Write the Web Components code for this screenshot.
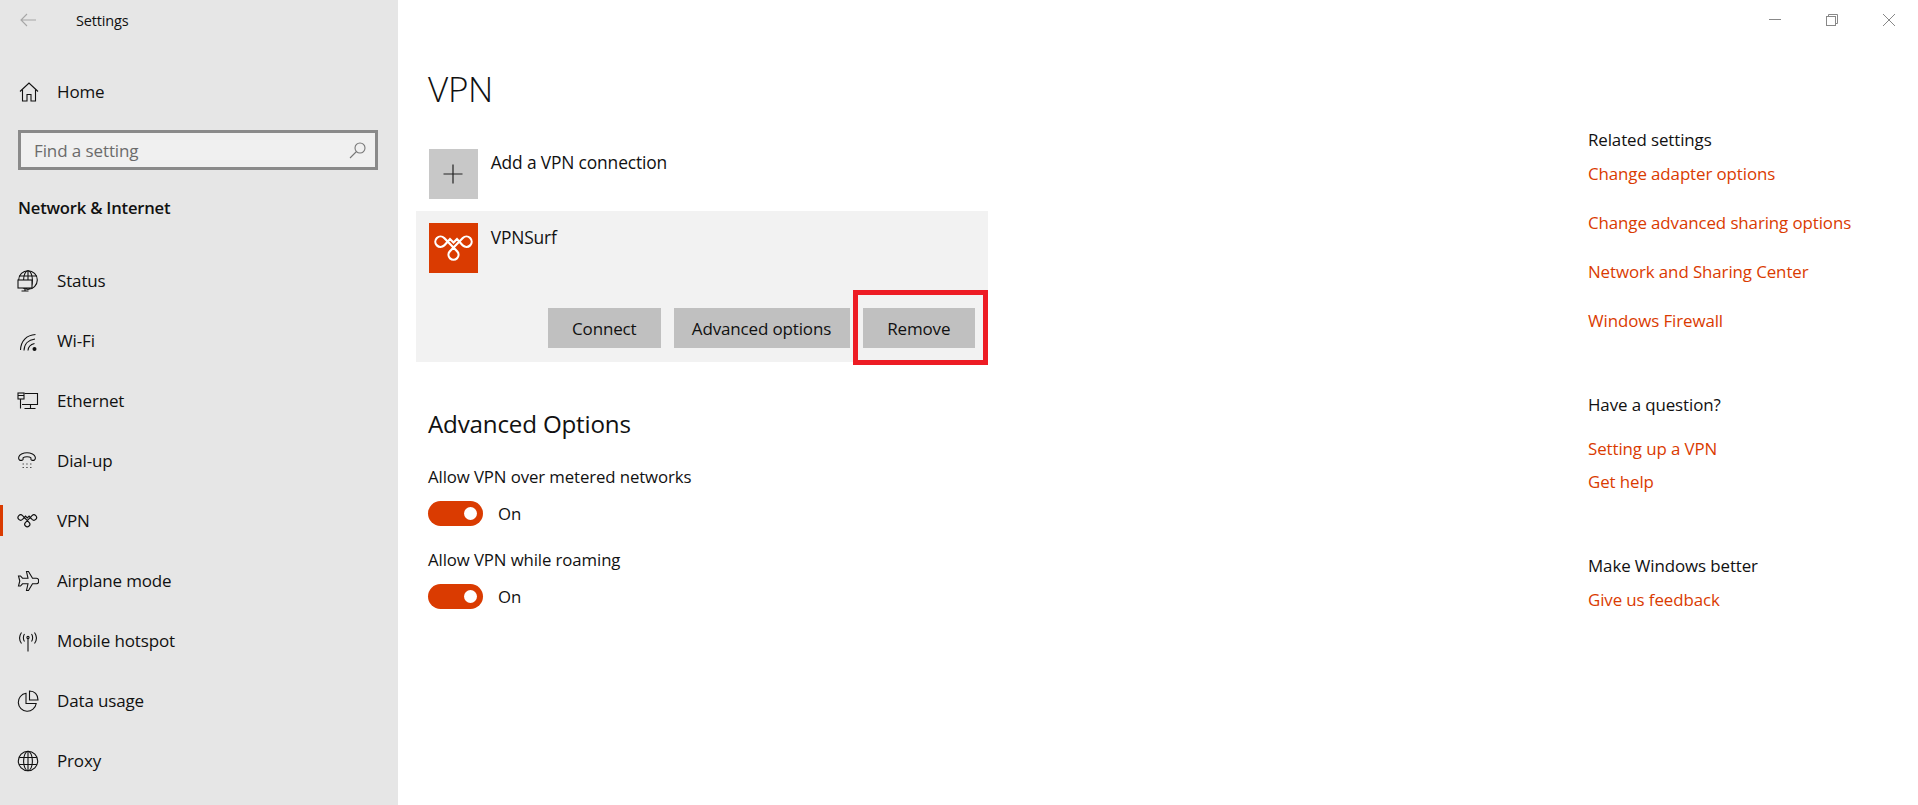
<!DOCTYPE html>
<html lang="en"><head><meta charset="utf-8"><title>Settings</title>
<style>
html,body{margin:0;padding:0;background:#fff;height:805px;overflow:hidden}
body{font-family:"Open Sans","Noto Sans",sans-serif;color:#111}
</style></head><body>
<settings-window>
  <nav-pane slot="nav" title-text="Settings" section="Network &amp; Internet">
    <nav-item icon="status">Status</nav-item>
    <nav-item icon="wifi">Wi-Fi</nav-item>
    <nav-item icon="ethernet">Ethernet</nav-item>
    <nav-item icon="dialup">Dial-up</nav-item>
    <nav-item icon="vpn" active>VPN</nav-item>
    <nav-item icon="airplane">Airplane mode</nav-item>
    <nav-item icon="hotspot">Mobile hotspot</nav-item>
    <nav-item icon="data">Data usage</nav-item>
    <nav-item icon="proxy">Proxy</nav-item>
  </nav-pane>
  <window-controls slot="bar"></window-controls>
  <vpn-content slot="content">
    <tile-row kind="add">Add a VPN connection</tile-row>
    <vpn-panel>
      <tile-row kind="vpn">VPNSurf</tile-row>
      <action-button slot="actions">Connect</action-button>
      <action-button slot="actions" style="--w:176px">Advanced options</action-button>
      <action-button slot="actions" marked>Remove</action-button>
    </vpn-panel>
    <section-heading>Advanced Options</section-heading>
    <toggle-row style="--top:25px">Allow VPN over metered networks</toggle-row>
    <toggle-row style="--top:22px">Allow VPN while roaming</toggle-row>
  </vpn-content>
  <aside-pane slot="aside">
    <link-group heading="Related settings" style="--top:88px;--first:10px;--gap:25px">
      <a href="#">Change adapter options</a>
      <a href="#">Change advanced sharing options</a>
      <a href="#">Network and Sharing Center</a>
      <a href="#">Windows Firewall</a>
    </link-group>
    <link-group heading="Have a question?" style="--top:60px;--first:20px;--gap:9px">
      <a href="#">Setting up a VPN</a>
      <a href="#">Get help</a>
    </link-group>
    <link-group heading="Make Windows better" style="--top:60px;--first:10px;--gap:0px">
      <a href="#">Give us feedback</a>
    </link-group>
  </aside-pane>
</settings-window>
<script>
const svg=(inner,w=22,h=22)=>`<svg width="${w}" height="${h}" viewBox="0 0 22 22" fill="none" stroke="currentColor" stroke-width="1.1" aria-hidden="true">${inner}</svg>`;
const KNOT='M15.2 15A5.2 5.2 0 1 0 15.2 22.4L21 16L24.5 19.5L28 16L33.8 22.4A5.2 5.2 0 1 0 33.8 15L20.7 28.5A5 5 0 1 0 28.3 28.5L15.2 15';
const ICONS={
 home:'<path d="M3 10.5 12 2l9 8.5"/><path d="M5.5 8.5V20H10v-6.5h4V20h4.5V8.5"/>',
 status:'<circle cx="11" cy="10" r="9.3"/><path d="M2.2 6h17.6M11 .7V10"/><ellipse cx="11" cy="10" rx="4.4" ry="9.3"/><rect x="1" y="10" width="14" height="8" fill="#e6e6e6"/><path d="M8 18v2.5M4.5 21h7"/>',
 wifi:'<path d="M3.5 20C3.8 11 9.5 5 18.5 4.5M7 20.5c.2-6.3 4.3-10.7 11-11.5M11 20.5c.2-3.4 2.5-6 6.5-7"/><circle cx="17.5" cy="19" r="2" fill="currentColor" stroke="none"/>',
 ethernet:'<path d="M7.5 3.5H20.5V14.5H5"/><rect x="1" y="3" width="6" height="6"/><path d="M1 5.5h6M3.5 9v9.5M13.5 14.5V18M7.5 18.5h11"/>',
 dialup:'<g transform="translate(-1 -.5)"><path d="M3.5 10.5C2 9.500 2.2 6 5.5 4.500 9 3 13 3 16.500 4.500c3.300 1.500 3.500 5 2 6-1 .7-3.200.5-3.500-.5-.2-.8.2-1.300-.3-1.900-1.300-1.100-6-1.100-7.400 0-.5.600-.1 1.100-.3 1.900-.3 1-2.500 1.200-3.500.5z"/><path opacity=".7" d="M6.500 14.500h1.500M10.200 14.500h1.500M14 14.500h1.500M6.500 18h1.500M10.200 18h1.500M14 18h1.500"/></g>',
 vpn:'<g transform="translate(-2.2 -2) scale(.51)" stroke-width="2.3"><path d="'+KNOT+'"/></g>',
 airplane:'<path d="M9.5 1.500h2l4 6.700h4c1.400 0 2.200 1.300 2.200 2.800s-.8 2.800-2.200 2.800h-4l-4 6.700h-2l1.500-6.700H5.500l-2 2.200H1.500L2.800 11 1.500 6h2l2 2.200H11z"/>',
 hotspot:'<g transform="translate(0 1.5)"><path d="M11 7.500V20"/><circle cx="11" cy="6" r="1.100"/><path d="M7.500 2.500C6 4.500 6 8 7.500 10M14.500 2.500c1.500 2 1.500 5.500 0 7.500M4.500 1C2 4.500 2 8.500 4.500 12M17.500 1c2.500 3.500 2.500 7.500 0 11"/></g>',
 data:'<path d="M9 3.300a9 9 0 1 0 10.200 10.200H9z"/><path d="M12.500 1c5 0 8.500 3.500 8.500 9h-8.500z"/>',
 proxy:'<circle cx="11" cy="11" r="9.700"/><ellipse cx="11" cy="11" rx="4.400" ry="9.700"/><path d="M11 1.300V20.700M2.200 7.500h17.600M2.200 14.500h17.600"/>',
};
const def=(name,css,html)=>{
  customElements.define(name,class extends HTMLElement{
    constructor(){super();this.attachShadow({mode:'open'});}
    connectedCallback(){ if(this._d) return; this._d=1;
      this.shadowRoot.innerHTML=`<style>${css}</style>`+(typeof html==='function'?html(this):html);}
  });
};
def('settings-window',`
 :host{display:grid;grid-template-columns:398px 1fr;width:1918px;height:805px;overflow:hidden;background:#fff;color:#111}
 .main{display:flex;flex-direction:column;min-width:0}
 .row{display:grid;grid-template-columns:1fr 330px;flex:1}
`,`<slot name="nav"></slot><div class="main"><slot name="bar"></slot><div class="row"><slot name="content"></slot><slot name="aside"></slot></div></div>`);

def('nav-pane',`
 :host{display:block;background:#e6e6e6;height:805px;overflow:hidden}
 header{height:40px;display:flex;align-items:center;padding-left:20px}
 header svg{color:#a6a6a6}
 header span{margin-left:40px;font-size:14.5px;letter-spacing:-.15px;color:#111}
 .home{margin-top:22px}
 .box{box-sizing:border-box;margin:8px 0 0 18px;width:360px;height:40px;border:3px solid #8a8a8a;background:#f0f0f0;display:flex;align-items:center;justify-content:space-between;padding:0 9px 0 13px;color:#6b6b6b;font-size:17px;letter-spacing:-.1px}
 .box svg{color:#777}
 h2{margin:18px 0 23px;height:40px;line-height:40px;padding-left:18px;font-size:16.6px;font-weight:600;letter-spacing:-.2px;color:#111}
`,el=>`<header><svg width="16" height="14" viewBox="0 0 16 14" fill="none" stroke="currentColor" stroke-width="1.1"><path d="M16 7H1M7 1 1 7l6 6"/></svg><span>${el.getAttribute('title-text')}</span></header>
 <nav-item class="home" icon="home">Home</nav-item>
 <div class="box"><span>Find a setting</span><svg width="17" height="17" viewBox="0 0 17 17" fill="none" stroke="currentColor" stroke-width="1.1"><circle cx="11" cy="6" r="5"/><path d="M7.5 9.5 1 16"/></svg></div>
 <h2>${el.getAttribute('section').replace('&','&amp;')}</h2><slot></slot>`);

def('nav-item',`
 :host{display:flex;align-items:center;height:60px;padding-left:17px;gap:18px;font-size:17px;letter-spacing:-.15px;color:#111;position:relative}
 :host([active])::before{content:"";position:absolute;left:0;top:14px;height:31px;width:3px;background:#da3b01}
 svg{flex:none;display:block}
 span{margin-top:-2px}
`,el=>svg(ICONS[el.getAttribute('icon')])+`<span><slot></slot></span>`);

def('window-controls',`
 :host{display:flex;justify-content:flex-end;height:40px;color:#888}
 div{display:flex;gap:45px;padding:14px 23px 0 0}
 svg{display:block}
`,`<div>
 <svg width="12" height="12" viewBox="0 0 12 12" stroke="currentColor" fill="none"><path d="M0 5.5h12"/></svg>
 <svg width="12" height="12" viewBox="0 0 12 12" stroke="currentColor" fill="none"><rect x=".5" y="2.5" width="9" height="9"/><path d="M2.5 2.5V.5h9v9H9.5"/></svg>
 <svg width="12" height="12" viewBox="0 0 12 12" stroke="currentColor" fill="none"><path d="M0 0l12 12M12 0 0 12"/></svg>
 </div>`);

def('vpn-content',`
 :host{display:block;padding-left:30px}
 h1{margin:24px 0 35px;font-weight:300;font-size:35px;line-height:50px;letter-spacing:-.3px;color:#111}
`,`<h1>VPN</h1><slot></slot>`);

def('tile-row',`
 :host{display:flex;gap:13.2px;margin-left:.5px;font-size:17.4px;letter-spacing:-.15px}
 .t{flex:none;width:49px;height:50px;display:flex;align-items:center;justify-content:center}
 .add{background:#c8c8c8;color:#222}
 .vpn{background:#da3b01;color:#fff}
 span{line-height:24px;margin-top:1px}
 span.k{margin-top:2px}
 svg{display:block}
`,el=>{
  const add=el.getAttribute('kind')==='add';
  const g=add?`<svg width="20" height="20" viewBox="0 0 20 20" stroke="currentColor" stroke-width="1.2"><path d="M10 .5v19M.5 10h19"/></svg>`
  :`<svg width="49" height="50" viewBox="0 0 49 50" fill="none" stroke="currentColor" stroke-width="2.2"><path d="${KNOT}"/></svg>`;
  return `<div class="t ${add?'add':'vpn'}">${g}</div><span class="${add?'':'k'}"><slot></slot></span>`;});

def('vpn-panel',`
 :host{display:block;box-sizing:border-box;width:572px;height:151px;margin:12px 0 0 -12px;padding:12px 13px 13px 12px;background:#f2f2f2}
 .a{display:flex;justify-content:flex-end;gap:13px;margin-top:35px}
`,`<slot></slot><div class="a"><slot name="actions"></slot></div>`);

def('action-button',`
 :host{display:flex;align-items:center;justify-content:center;box-sizing:border-box;width:var(--w,112.5px);height:40px;padding-top:1.5px;background:#c0c0c0;font-size:17px;letter-spacing:-.15px;position:relative;color:#111}
 :host([marked])::after{content:"";position:absolute;box-sizing:border-box;left:-9.5px;top:-18px;width:135px;height:75px;border:5px solid #ed1c24;pointer-events:none}
`,`<slot></slot>`);

def('section-heading',`
 :host{display:block;margin-top:46px;font-size:24.2px;line-height:32px;letter-spacing:-.2px;color:#111}
`,`<slot></slot>`);

def('toggle-row',`
 :host{display:block;margin-top:var(--top,27px);font-size:16.8px;letter-spacing:-.1px;color:#111}
 .l{line-height:24px}
 .r{display:flex;align-items:center;margin-top:12px;height:25px;gap:15px}
 .s{width:55px;height:25px;border-radius:13px;background:#da3b01;position:relative}
 .s::after{content:"";position:absolute;right:6px;top:6px;width:13px;height:13px;border-radius:50%;background:#fff}
`,`<div class="l"><slot></slot></div><div class="r"><div class="s"></div><span>On</span></div>`);

def('aside-pane',`:host{display:block}`,`<slot></slot>`);

def('link-group',`
 :host{display:block;margin-top:var(--top,0);font-size:16.9px;letter-spacing:-.1px;line-height:24px}
 .h{color:#111;margin-bottom:var(--first,10px)}
 ::slotted(a){display:block;color:#da3b01;text-decoration:none;margin-bottom:var(--gap,0)}
 ::slotted(a:last-child){margin-bottom:0}
`,el=>`<div class="h">${el.getAttribute('heading')}</div><slot></slot>`);
</script>
</body></html>
